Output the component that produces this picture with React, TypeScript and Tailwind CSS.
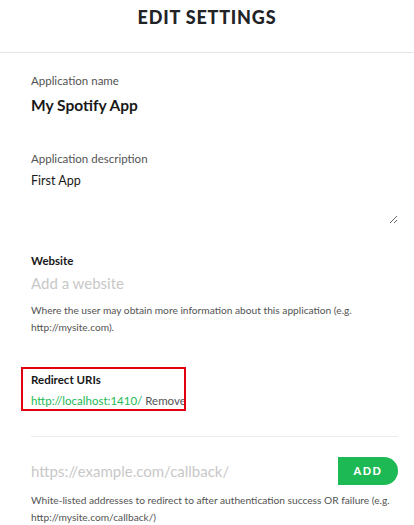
import { useState } from "react";

const font = { fontFamily: "Lato, 'Liberation Sans', sans-serif" };

function Label({ children, bold }: { children: React.ReactNode; bold?: boolean }) {
  return bold ? (
    <p className="text-[11.5px] font-bold leading-4 text-[#181818]">{children}</p>
  ) : (
    <p className="text-[11.5px] leading-4 text-[#535353]">{children}</p>
  );
}

export default function App() {
  const [desc, setDesc] = useState("First App");

  return (
    <div className="w-[414px] h-[525px] overflow-hidden bg-white" style={font}>
      <div className="h-[53px] border-b border-[#e6e6e6] flex justify-center pt-[5px]">
        <h1 className="text-[18px] font-black tracking-[0.8px] leading-[24px] text-[#222326]">EDIT SETTINGS</h1>
      </div>

      <div className="pl-[31px] pr-[16px]">
        <div className="pt-[20px]">
          <Label>Application name</Label>
          <p className="mt-[6px] text-[15.5px] font-bold leading-5 text-[#181818]">My Spotify App</p>
        </div>

        <div className="pt-[36px]">
          <Label>Application description</Label>
          <textarea
            value={desc}
            onChange={(e) => setDesc(e.target.value)}
            className="mt-[4px] block w-full h-[53px] text-[12.5px] leading-5 text-[#181818] outline-none resize-y p-0"
          />
        </div>

        <div className="pt-[29px]">
          <Label bold>Website</Label>
          <input
            placeholder="Add a website"
            className="mt-[4px] block w-full text-[15px] leading-5 outline-none placeholder:text-[#c8c8c8]"
          />
          <p className="mt-[9px] text-[10.2px] leading-[17px] text-[#535353] whitespace-nowrap">
            Where the user may obtain more information about this application (e.g.
            <br />
            http://mysite.com).
          </p>
        </div>

        <div className="mt-[31px] -ml-[10px] w-[165px] overflow-hidden border-2 border-[#e3000f] pl-[8px] pt-[3px] pb-0">
          <Label bold>Redirect URIs</Label>
          <p className="mt-[5px] text-[11.5px] leading-4 whitespace-nowrap">
            <span className="text-[#1db954]">http://localhost:1410/</span>{" "}
            <span className="text-[#535353]">Remove</span>
          </p>
        </div>

        <div className="mt-[25px] border-t border-[#ebebeb] w-[367px]" />

        <div className="mt-[20px] flex items-center w-[367px]">
          <input
            placeholder="https://example.com/callback/"
            className="flex-1 min-w-0 text-[15px] leading-5 outline-none placeholder:text-[#c8c8c8]"
          />
          <button className="w-[60px] h-[28px] rounded-r-full bg-[#1db954] text-white text-[11px] font-black tracking-[1.5px]">
            ADD
          </button>
        </div>
        <p className="mt-[7px] text-[10.2px] leading-[17px] text-[#535353] whitespace-nowrap">
          White-listed addresses to redirect to after authentication success OR failure (e.g.
          <br />
          http://mysite.com/callback/)
        </p>
      </div>
    </div>
  );
}
